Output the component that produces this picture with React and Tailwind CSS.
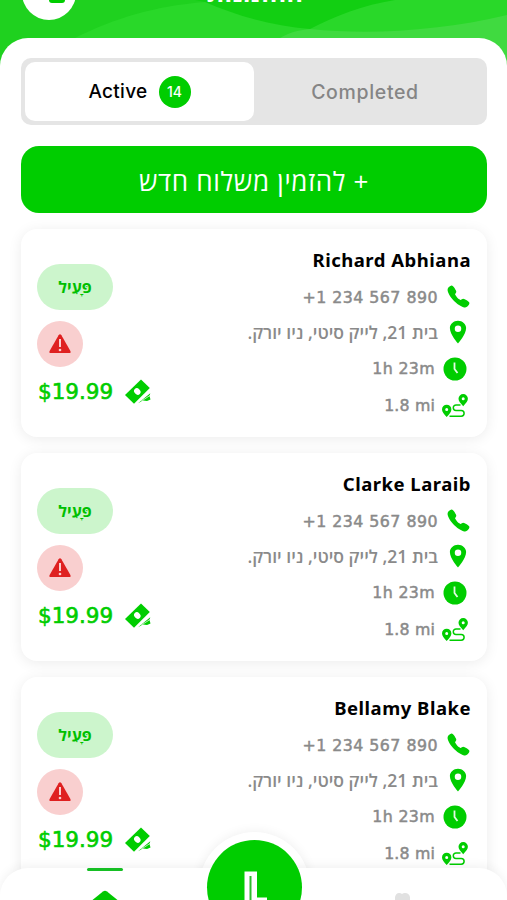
import { IoCall, IoLocationSharp } from 'react-icons/io5'

const orders = [
  { name: 'Richard Abhiana' },
  { name: 'Clarke Laraib' },
  { name: 'Bellamy Blake' },
]

function WarningIcon() {
  return (
    <svg viewBox="0 0 24 24" className="size-6">
      <path d="M10.6 3.2q1.4-2 2.8 0l9 15.800q.9 2-1.200 2H2.800q-2.100 0-1.200-2Z" fill="#df2020" />
      <path d="M12 7v8" stroke="#f9cfcf" strokeWidth="2" />
      <circle cx="12" cy="18" r="1.300" fill="#f9cfcf" />
    </svg>
  )
}

function ClockIcon() {
  return (
    <svg viewBox="0 0 24 24" className="size-6 shrink-0">
      <circle cx="12" cy="12" r="11.500" fill="#00cd00" />
      <path d="M11.500 5.500V12l3 4" fill="none" stroke="#e2fae2" strokeWidth="1.800" />
    </svg>
  )
}

function RouteIcon() {
  return (
    <svg viewBox="0 0 26 24" className="h-6 w-[26px] shrink-0">
      <path
        fill="#00cd00"
        fillRule="evenodd"
        d="M4.700 23C2 19.800 0 18 0 15.400a4.700 4.700 0 0 1 9.400 0c0 2.600-2 4.400-4.700 7.600ZM4.700 13.900a1.500 1.500 0 1 0 0 3 1.500 1.500 0 0 0 0-3ZM21.200 12.200C18.500 9 16.500 7.400 16.500 4.800a4.700 4.700 0 0 1 9.400 0c0 2.600-2 4.200-4.700 7.400ZM21.200 3.300a1.500 1.500 0 1 0 0 3 1.500 1.500 0 0 0 0-3Z"
      />
      <path
        d="M18.500 11H14a2.700 2.700 0 0 0 0 5.400h5.200a2.900 2.900 0 0 1 0 5.800H7.500"
        fill="none"
        stroke="#00cd00"
        strokeWidth="1.500"
      />
    </svg>
  )
}

function CashIcon() {
  return (
    <svg viewBox="0 0 27 27" className="size-[27px] shrink-0">
      <path d="M1 16 17 .5 25.800 9 10 24.800Z" fill="#00cd00" />
      <ellipse cx="13.300" cy="12.500" rx="3.500" ry="2.900" transform="rotate(45 13.300 12.500)" fill="#fff" />
      {/* second note showing from underneath */}
      <path d="m14 24.200 12.300-10-.8 2.800 1 3.500-3.500 1.500-4-.5Z" fill="#00cd00" />
      <path d="m12.500 24.500 13.500-12.500" stroke="#fff" strokeWidth=".8" />
      <path d="m17 22.300 9-5.800" stroke="#fff" strokeWidth=".7" />
    </svg>
  )
}

function OrderCard({ name }) {
  return (
    <article className="flex h-[208px] shrink-0 justify-between rounded-2xl bg-white pt-[18px] pr-4 pl-4 shadow-[0_2px_14px_rgba(0,0,0,0.08)]">
      <div className="flex flex-col items-start pt-[17px]">
        <span
          dir="rtl"
          className="flex h-[46px] w-[76px] items-center justify-center rounded-full bg-[#ccf5cc] pb-px font-['Open_Sans','Liberation_Sans',sans-serif] text-[16px] font-bold text-[#00bf00]"
        >
          פָּעִיל
        </span>
        <span className="mt-[11px] flex size-[46px] items-center justify-center rounded-full bg-[#f9cfcf]">
          <WarningIcon />
        </span>
        <div className="mt-[11px] flex items-center gap-[9px] pl-px text-[#00cd00]">
          <span className="w-[77px] font-['DejaVu_Sans',sans-serif] text-[21.500px] leading-7 whitespace-nowrap [-webkit-text-stroke:0.600px_#00cd00]">
            $19.99
          </span>
          <CashIcon />
        </div>
      </div>

      <div className="flex flex-col items-end font-['DejaVu_Sans',sans-serif] text-[15.800px] text-[#8a8a8a] [-webkit-text-stroke:0.500px_#8a8a8a]">
        <h2 className="font-['Noto_Sans',sans-serif] text-[18.500px] leading-[26px] font-bold tracking-[0.500px] text-black [-webkit-text-stroke:0]">
          {name}
        </h2>
        <div className="mt-[11px] flex h-[27px] items-center gap-2">
          <span className="tracking-[0.480px]">+1 234 567 890</span>
          <IoCall className="mb-0.5 size-[25px] text-[#00cd00] [-webkit-text-stroke:0]" />
        </div>
        <div className="mt-2 flex h-[27px] items-center gap-[7px] [-webkit-text-stroke:0]">
          <span dir="rtl" className="font-['Open_Sans','Liberation_Sans',sans-serif] text-[17.600px] font-semibold">
            בית 21, לייק סיטי, ניו יורק.
          </span>
          <IoLocationSharp className="mb-0.5 size-[26px] text-[#00cd00]" />
        </div>
        <div className="mt-[9px] flex h-[27px] items-center gap-2 pr-1">
          <span className="tracking-[0.350px]">1h 23m</span>
          <ClockIcon />
        </div>
        <div className="mt-[10px] flex h-[27px] items-center gap-[7px] pr-[3px]">
          <span className="tracking-[0.150px]">1.8 mi</span>
          <RouteIcon />
        </div>
      </div>
    </article>
  )
}

function Header() {
  return (
    <header className="relative h-[38px] bg-[#20d020]">
      <svg viewBox="0 0 507 70" className="absolute inset-x-0 top-0 h-[70px] w-full">
        <path d="M0 0h507v70H0Z" fill="#1fd11f" />
        <path d="M75 38C115 18 155 6 205 2L360 0h147v70H0V38Z" fill="#29d829" />
        <path d="M205 2c30 13 66 24 105 27 25-13 53-24 85-29H195Z" fill="#12cf12" />
        <path d="M280 38c8-5 18-8 30-9 60 6 130 2 197-14v55H280Z" fill="#40da40" />
        <path d="M0 38h80L0 70Z" fill="#1fd11f" />
      </svg>
      <div className="absolute -top-[34px] left-[22px] size-[54px] rounded-full bg-white" />
      <div className="absolute top-0 left-[49px] h-[3px] w-[16px] rounded-b-sm bg-[#00cd00]" />
      <div
        dir="rtl"
        className="absolute -top-[26px] left-[205px] flex w-[100px] justify-center font-['Open_Sans','Liberation_Sans',sans-serif] text-[25px] leading-9 font-bold tracking-[0.300px] whitespace-nowrap text-white"
      >
        ההזמנות
      </div>
    </header>
  )
}

function BottomBar() {
  return (
    <nav className="absolute inset-x-0 bottom-0 h-8">
      <div className="absolute -top-[36px] left-[199px] size-[111px] rounded-full bg-white shadow-[0_0_12px_rgba(0,0,0,0.07)]" />
      <div className="absolute inset-0 rounded-t-[28px] bg-white shadow-[0_-3px_10px_rgba(0,0,0,0.05)]" />
      <div className="absolute -top-[28px] left-[207px] size-[95px] rounded-full bg-[#00cd00]" />
      <div className="absolute top-0 left-[87px] h-[3px] w-9 rounded-full bg-[#16bf24]" />
      <svg viewBox="0 0 507 32" className="absolute inset-0 h-8 w-full">
        <path d="m90 34 13-10.500q2-1.500 4 0L120 34Z" fill="#00c700" />
        <path d="M244.500 3.500H257v29h-12.500Z" fill="#fff" />
        <path d="M249.500 8h2v24h-2Z" fill="#2dbd2d" />
        <path d="M257 29.500h10V32h-10Z" fill="#fff" />
        <path d="M395 32v-3q1-4 4-4 2 0 3 1 1-1 3-1 4 0 5 4v3Z" fill="#e1e1e1" />
      </svg>
    </nav>
  )
}

export default function App() {
  return (
    <div className="relative h-[900px] w-[507px] overflow-hidden bg-white">
      <Header />
      <main className="relative flex h-[862px] flex-col gap-4 overflow-hidden rounded-t-[28px] bg-white px-5 pt-5 pl-[21px]">
        <div className="flex h-[67px] shrink-0 rounded-[10px] bg-[#e5e5e5] p-1 font-['Inter',sans-serif] text-[19px] font-medium">
          <button className="flex w-[229px] items-center justify-center gap-[11px] rounded-[10px] bg-white text-black">
            <span className="pt-0.5 tracking-[0.300px]">Active</span>
            <span className="flex size-8 items-center justify-center rounded-full bg-[#00cd00] text-[14px] text-white">14</span>
          </button>
          <button className="flex-1 pt-0.5 pr-[7px] text-[19.500px] tracking-[0.650px] text-[#858585]">Completed</button>
        </div>
        <button
          dir="rtl"
          className="mt-[5px] h-[67px] shrink-0 rounded-[18px] bg-[#00cd00] pt-[3px] font-['Open_Sans','Liberation_Sans',sans-serif] text-[26px] tracking-[0.700px] text-white"
        >
          + להזמין משלוח חדש
        </button>
        {orders.map((order) => (
          <OrderCard key={order.name} name={order.name} />
        ))}
      </main>
      <BottomBar />
    </div>
  )
}
